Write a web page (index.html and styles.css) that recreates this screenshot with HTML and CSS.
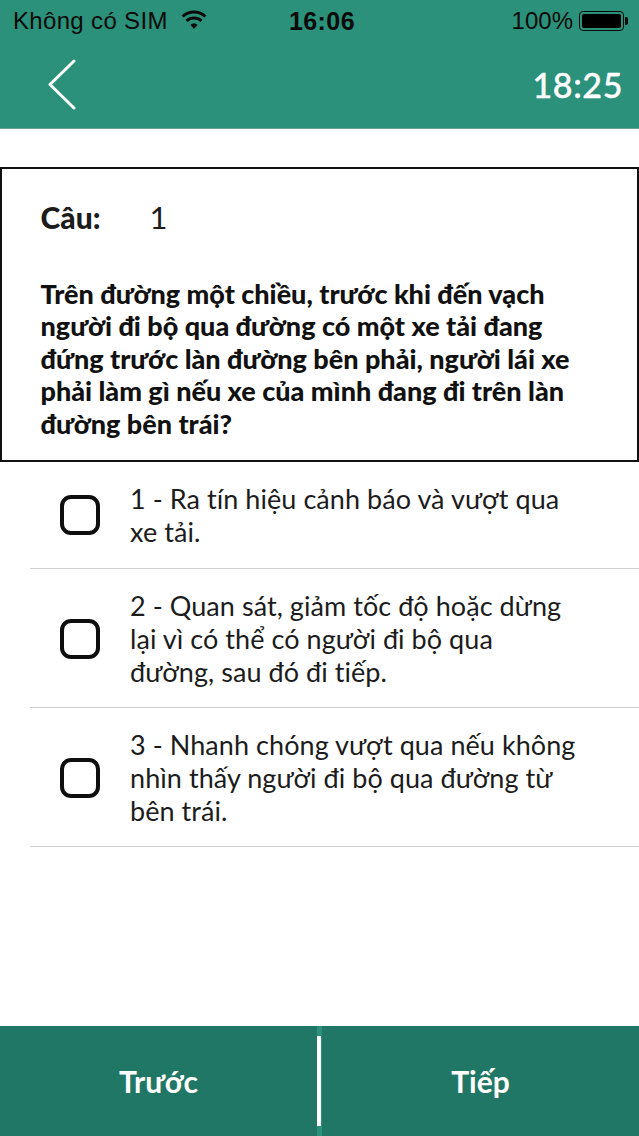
FILE: index.html
```html
<!DOCTYPE html>
<html lang="vi">
<head>
<meta charset="utf-8">
<title>Câu hỏi</title>
<link rel="stylesheet" href="styles.css">
</head>
<body>
<div class="app">
  <header class="header">
    <div class="status">
      <div class="status-left">
        <span>Không có SIM</span>
        <svg class="wifi" viewBox="0 0 26 20" width="26" height="20"><path d="M13 19l-3.600-4.200a5.600 5.600 0 0 1 7.200 0z" fill="#0a0a0a"/><path d="M5.600 10.900a11 11 0 0 1 14.800 0M1.600 6.500a17 17 0 0 1 22.800 0" fill="none" stroke="#0a0a0a" stroke-width="3"/></svg>
      </div>
      <div class="status-time">16:06</div>
      <div class="status-right">
        <span>100%</span>
        <span class="battery"><span class="battery-fill"></span></span>
        <span class="battery-tip"></span>
      </div>
    </div>
    <div class="nav">
      <svg class="back" viewBox="0 0 30 52" width="30" height="52"><path d="M27 3L3 26.500 27 50" fill="none" stroke="#fff" stroke-width="3" stroke-linecap="round" stroke-linejoin="round"/></svg>
      <div class="timer">18:25</div>
    </div>
  </header>
  <main class="main">
    <section class="question">
      <div class="q-head"><b class="q-label">Câu:</b><span class="q-num">1</span></div>
      <p class="q-text">Trên đường một chiều, trước khi đến vạch người đi bộ qua đường có một xe tải đang đứng trước làn đường bên phải, người lái xe phải làm gì nếu xe của mình đang đi trên làn đường bên trái?</p>
    </section>
    <ul class="options">
      <li class="option"><span class="check"></span><span class="opt-text">1 - Ra tín hiệu cảnh báo và vượt qua xe tải.</span></li>
      <li class="option"><span class="check"></span><span class="opt-text">2 - Quan sát, giảm tốc độ hoặc dừng lại vì có thể có người đi bộ qua đường, sau đó đi tiếp.</span></li>
      <li class="option"><span class="check"></span><span class="opt-text">3 - Nhanh chóng vượt qua nếu không nhìn thấy người đi bộ qua đường từ bên trái.</span></li>
    </ul>
  </main>
  <footer class="footer">
    <div class="foot-btn">Trước</div>
    <div class="foot-sep"><span class="foot-line"></span></div>
    <div class="foot-btn">Tiếp</div>
  </footer>
</div>
</body>
</html>
```
FILE: styles.css
```css
* { box-sizing: border-box; }
html, body { margin: 0; padding: 0; }
body { background: #fff; font-family: "Lato", "Noto Sans", sans-serif; color: #1c1c1c; }
.app { width: 639px; height: 1136px; display: flex; flex-direction: column; overflow: hidden; }

.header { height: 129px; background: #2b917a; border-bottom: 1px solid #6f9f94; flex: none; }
.status { height: 44px; display: grid; grid-template-columns: 1fr auto 1fr; align-items: center; padding: 0 11px 2px 13px; font-family: "Liberation Sans", Arial, sans-serif; font-size: 24px; color: #0a0a0a; }
.status-left { display: flex; align-items: center; gap: 13px; letter-spacing: 0.33px; }
.wifi { margin-top: -2px; }
.status-time { font-weight: 700; font-size: 25px; letter-spacing: 0.4px; margin-right: -3px; }
.status-right { display: flex; align-items: center; justify-content: flex-end; }
.battery { width: 45px; height: 20px; margin-left: 6px; border: 1.5px solid #0a0a0a; border-radius: 4px; padding: 2px; display: flex; }
.battery-fill { flex: 1; background: #000; border-radius: 2px; }
.battery-tip { width: 3px; height: 8px; background: #0a0a0a; border-radius: 0 2px 2px 0; margin-left: 1px; }
.nav { height: 84px; display: flex; justify-content: space-between; align-items: center; padding: 0 16px 4px 47px; }
.timer { color: #fff; font-size: 34px; font-weight: 500; font-family: "Lato", sans-serif; letter-spacing: 0.6px; -webkit-text-stroke: 0.4px #fff; }

.main { flex: 1; padding-top: 38px; }
.question { height: 295px; border: 2.500px solid #111; padding: 30.500px 30px 0 38.500px; background: #fff; }
.q-head { display: flex; align-items: center; height: 34px; }
.q-label { width: 109px; font-size: 30px; font-weight: 900; }
.q-num { font-size: 31px; }
.q-text { margin: 44px 20px 0 0; font-size: 27px; line-height: 32.500px; font-weight: 900; color: #111; }

.options { list-style: none; margin: 0 0 0 30px; padding: 0; }
.option { display: flex; align-items: center; padding: 20px 59px 19px 30px; border-bottom: 1px solid #cfcfcf; }
.option:first-child { padding-bottom: 20px; }
.check { flex: none; width: 40px; height: 40px; border: 4px solid #0e0e0e; border-radius: 11px; margin: 0 30px 0 0; }
.opt-text { font-size: 27px; line-height: 33px; letter-spacing: 0.06px; }

.footer { height: 110px; flex: none; display: flex; background: #207765; }
.foot-btn { flex: 1; display: flex; align-items: center; justify-content: center; color: #fff; font-size: 30px; font-weight: 700; }
.foot-sep { width: 5px; flex: none; display: flex; padding: 10px 0 10px; background: #2b917a; }
.foot-line { width: 4px; background: #fff; }
```
